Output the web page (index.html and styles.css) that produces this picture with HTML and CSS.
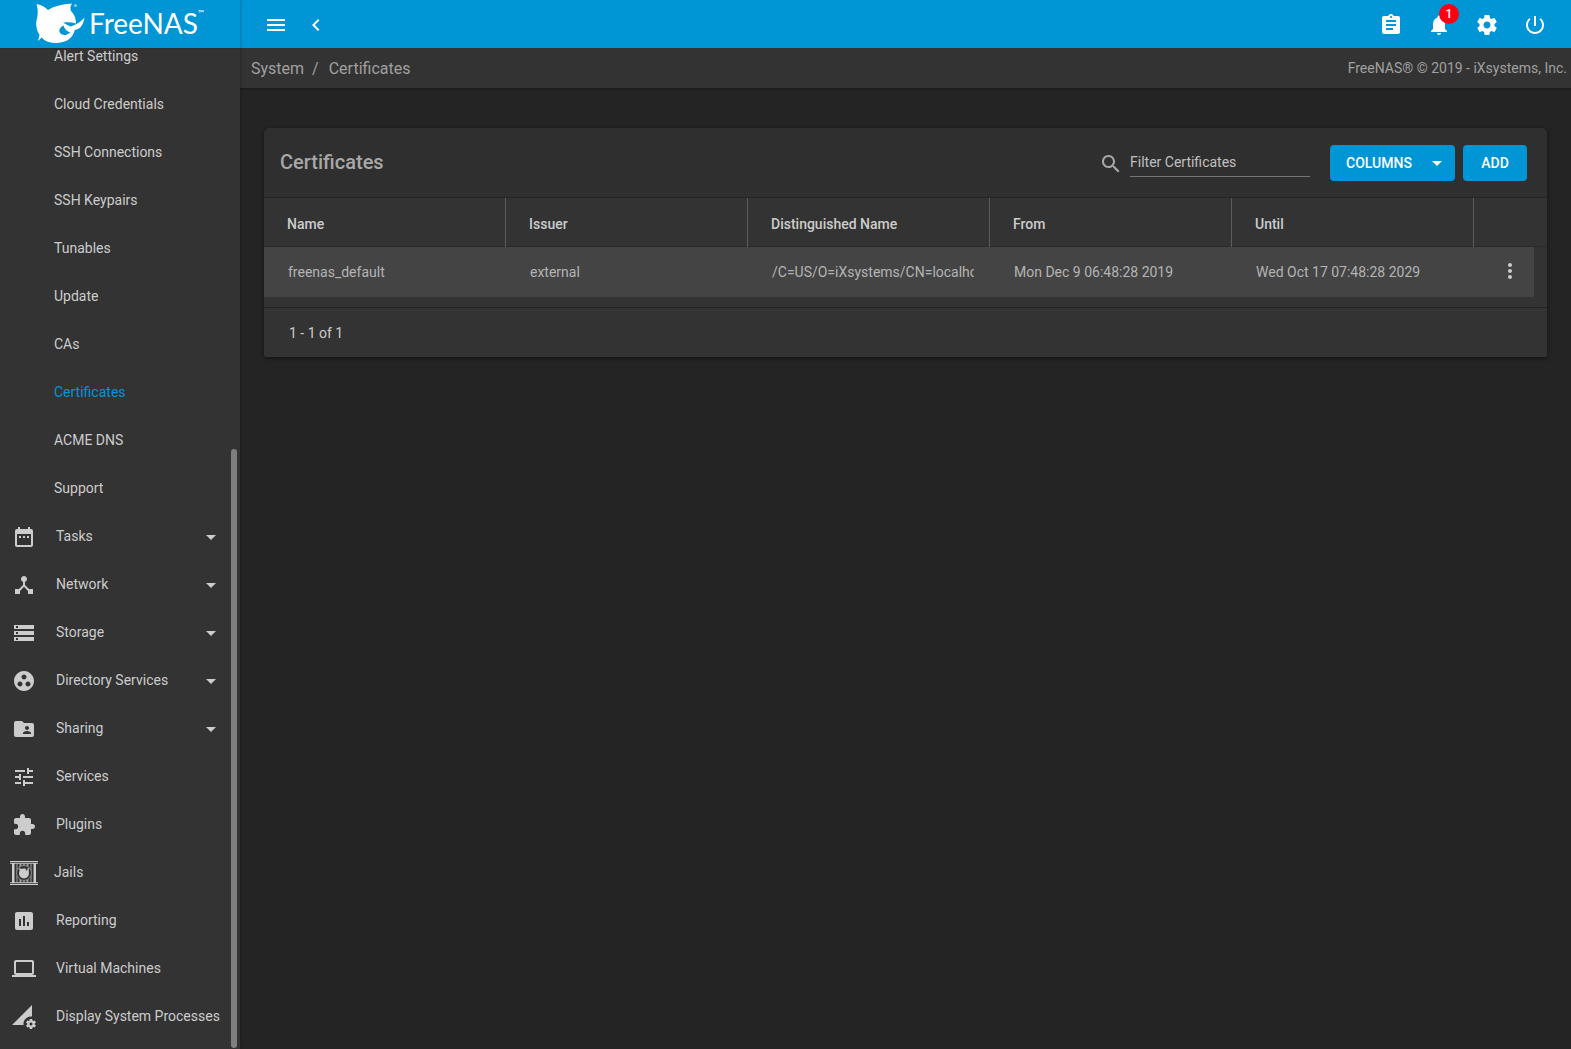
FILE: index.html
```html
<!DOCTYPE html>
<html lang="en">
<head>
<meta charset="utf-8">
<title>FreeNAS - Certificates</title>
<link rel="stylesheet" href="styles.css">
</head>
<body>
<svg class="defs" aria-hidden="true">
  <symbol id="drop" viewBox="0 0 24 24"><path d="M7 10l5 5 5-5z"/></symbol>
</svg>
<div class="app">
  <header class="topbar">
    <a class="brand" href="#" aria-label="FreeNAS home">
      <svg class="shark" viewBox="0 0 50 42" aria-hidden="true">
        <path d="M0.500 1Q7 2 12 7Q20 1.500 36 0.500Q33.500 4 35 8Q40 13 40 20.500Q34 18.500 27 19.500Q31 22 34.500 23.500Q43 21 48.500 14.500Q47.500 22 43 25.500Q41 27 39 26.500Q36 39 21 40Q10 40 5.500 34.500L2 38L3.500 32Q-1 25 0.500 17.500Q3 9 0.500 1Z"/>
        <path class="cut" d="M27.500 22.500Q22.500 25 23.500 29Q25 32.500 30 32L34.500 29.500Q29 28 27.500 22.500Z"/>
        <circle cx="39.500" cy="2.500" r="1.500" opacity=".5"/>
      </svg>
      <span class="wordmark">FreeNAS<sup>™</sup></span>
    </a>
    <div class="tools">
      <button class="icon-btn" aria-label="Toggle menu"><svg viewBox="0 0 24 24"><path d="M3 18h18v-2H3v2zm0-5h18v-2H3v2zm0-7v2h18V6H3z"/></svg></button>
      <button class="icon-btn back" aria-label="Collapse menu"><svg viewBox="0 0 24 24"><path d="M15.410 7.410L14 6l-6 6 6 6 1.410-1.410L10.830 12z"/></svg></button>
    </div>
    <div class="actions">
      <button class="icon-btn" aria-label="Task manager"><svg viewBox="0 0 24 24"><path d="M19 3h-4.180C14.400 1.840 13.300 1 12 1c-1.300 0-2.400.84-2.820 2H5c-1.100 0-2 .9-2 2v14c0 1.100.9 2 2 2h14c1.100 0 2-.9 2-2V5c0-1.100-.9-2-2-2zm-7 0c.55 0 1 .45 1 1s-.45 1-1 1-1-.45-1-1 .45-1 1-1zm2 14H7v-2h7v2zm3-4H7v-2h10v2zm0-4H7V7h10v2z"/></svg></button>
      <button class="icon-btn" aria-label="Notifications, 1 new"><svg viewBox="0 0 24 24"><path d="M12 22c1.100 0 2-.9 2-2h-4c0 1.100.89 2 2 2zm6-6v-5c0-3.070-1.640-5.640-4.500-6.320V4c0-.83-.67-1.500-1.500-1.500s-1.500.67-1.500 1.500v.68C7.630 5.360 6 7.920 6 11v5l-2 2v1h16v-1l-2-2z"/></svg><span class="badge">1</span></button>
      <button class="icon-btn" aria-label="Settings"><svg viewBox="0 0 24 24"><path d="M19.430 12.980c.04-.32.07-.64.07-.98s-.03-.66-.07-.98l2.110-1.650c.19-.15.24-.42.12-.64l-2-3.460c-.12-.22-.39-.3-.61-.22l-2.490 1c-.52-.4-1.080-.73-1.690-.98l-.38-2.650C14.460 2.180 14.250 2 14 2h-4c-.25 0-.46.18-.49.42l-.38 2.650c-.61.25-1.170.59-1.690.98l-2.490-1c-.23-.09-.49 0-.61.22l-2 3.460c-.13.22-.07.49.12.64l2.110 1.650c-.04.32-.07.65-.07.98s.03.66.07.98l-2.110 1.650c-.19.15-.24.42-.12.64l2 3.460c.12.22.39.3.61.22l2.490-1c.52.4 1.080.73 1.690.98l.38 2.650c.03.24.24.42.49.42h4c.25 0 .46-.18.49-.42l.38-2.650c.61-.25 1.170-.59 1.690-.98l2.490 1c.23.09.49 0 .61-.22l2-3.460c.12-.22.07-.49-.12-.64l-2.110-1.650zM12 15.500c-1.930 0-3.500-1.570-3.500-3.500s1.570-3.500 3.500-3.500 3.500 1.570 3.500 3.500-1.570 3.500-3.500 3.500z"/></svg></button>
      <button class="icon-btn" aria-label="Power"><svg viewBox="0 0 24 24"><path d="M13 3h-2v10h2V3zm4.830 2.170l-1.420 1.420C17.990 7.860 19 9.810 19 12c0 3.870-3.130 7-7 7s-7-3.130-7-7c0-2.190 1.010-4.140 2.580-5.420L6.170 5.170C4.230 6.820 3 9.260 3 12c0 4.970 4.030 9 9 9s9-4.030 9-9c0-2.740-1.230-5.180-3.170-6.830z"/></svg></button>
    </div>
  </header>

  <nav class="sidebar" aria-label="Main">
    <ul class="menu">
      <li><a class="sub" href="#">Alert Settings</a></li>
      <li><a class="sub" href="#">Cloud Credentials</a></li>
      <li><a class="sub" href="#">SSH Connections</a></li>
      <li><a class="sub" href="#">SSH Keypairs</a></li>
      <li><a class="sub" href="#">Tunables</a></li>
      <li><a class="sub" href="#">Update</a></li>
      <li><a class="sub" href="#">CAs</a></li>
      <li><a class="sub active" href="#" aria-current="page">Certificates</a></li>
      <li><a class="sub" href="#">ACME DNS</a></li>
      <li><a class="sub" href="#">Support</a></li>
      <li><a class="top" href="#"><svg viewBox="0 0 24 24"><path d="M9 11H7v2h2v-2zm4 0h-2v2h2v-2zm4 0h-2v2h2v-2zm2-7h-1V2h-2v2H8V2H6v2H5c-1.110 0-1.990.9-1.990 2L3 20c0 1.100.89 2 2 2h14c1.100 0 2-.9 2-2V6c0-1.100-.9-2-2-2zm0 16H5V9h14v11z"/></svg><span>Tasks</span><svg class="arrow"><use href="#drop"/></svg></a></li>
      <li><a class="top" href="#"><svg viewBox="0 0 24 24"><path d="M17 16l-4-4V8.820C14.160 8.400 15 7.300 15 6c0-1.660-1.340-3-3-3S9 4.340 9 6c0 1.300.84 2.400 2 2.820V12l-4 4H3v5h5v-3.050l4-4.200 4 4.200V21h5v-5h-4z"/></svg><span>Network</span><svg class="arrow"><use href="#drop"/></svg></a></li>
      <li><a class="top" href="#"><svg viewBox="0 0 24 24"><path d="M2 20h20v-4H2v4zm2-3h2v2H4v-2zM2 4v4h20V4H2zm4 3H4V5h2v2zm-4 7h20v-4H2v4zm2-3h2v2H4v-2z"/></svg><span>Storage</span><svg class="arrow"><use href="#drop"/></svg></a></li>
      <li><a class="top" href="#"><svg viewBox="0 0 24 24"><path d="M12 2C6.480 2 2 6.480 2 12s4.480 10 10 10 10-4.480 10-10S17.520 2 12 2zM8 17.500c-1.380 0-2.500-1.120-2.500-2.500s1.120-2.500 2.500-2.500 2.500 1.120 2.500 2.500-1.120 2.500-2.500 2.500zM9.500 8c0-1.380 1.120-2.500 2.500-2.500s2.500 1.120 2.500 2.500-1.120 2.500-2.500 2.500S9.500 9.380 9.500 8zm6.500 9.500c-1.380 0-2.500-1.120-2.500-2.500s1.120-2.500 2.500-2.500 2.500 1.120 2.500 2.500-1.120 2.500-2.500 2.500z"/></svg><span>Directory Services</span><svg class="arrow"><use href="#drop"/></svg></a></li>
      <li><a class="top" href="#"><svg viewBox="0 0 24 24"><path d="M20 6h-8l-2-2H4c-1.100 0-1.990.9-1.990 2L2 18c0 1.100.9 2 2 2h16c1.100 0 2-.9 2-2V8c0-1.100-.9-2-2-2zm-5 3c1.100 0 2 .9 2 2s-.9 2-2 2-2-.9-2-2 .9-2 2-2zm4 8h-8v-1c0-1.330 2.670-2 4-2s4 .67 4 2v1z"/></svg><span>Sharing</span><svg class="arrow"><use href="#drop"/></svg></a></li>
      <li><a class="top" href="#"><svg viewBox="0 0 24 24"><path d="M3 17v2h6v-2H3zM3 5v2h10V5H3zm10 16v-2h8v-2h-8v-2h-2v6h2zM7 9v2H3v2h4v2h2V9H7zm14 4v-2H11v2h10zm-6-4h2V7h4V5h-4V3h-2v6z"/></svg><span>Services</span></a></li>
      <li><a class="top" href="#"><svg viewBox="0 0 24 24"><path d="M20.500 11H19V7c0-1.100-.9-2-2-2h-4V3.500C13 2.120 11.880 1 10.500 1S8 2.120 8 3.500V5H4c-1.100 0-1.990.9-1.990 2v3.800H3.500c1.490 0 2.700 1.210 2.700 2.700s-1.210 2.700-2.700 2.700H2V20c0 1.100.9 2 2 2h3.800v-1.500c0-1.490 1.210-2.700 2.700-2.700 1.490 0 2.700 1.210 2.700 2.700V22H17c1.100 0 2-.9 2-2v-4h1.500c1.380 0 2.500-1.120 2.500-2.500S21.880 11 20.500 11z"/></svg><span>Plugins</span></a></li>
      <li><a class="top jails" href="#"><svg viewBox="0 0 28 24"><path d="M0 0h28v1H0zM0 1.700h28v1H0zM0 21.300h28v1H0zM0 23h28v1H0zM2 2.500h2.500v19H2zM23.500 2.500H26v19h-2.500z"/><path d="M6.500 2.500h1v19h-1zM9.500 2.500h2v19h-2zM13.200 2.500h1.600v19h-1.600zM16.500 2.500h2v19h-2zM20.500 2.500h1v19h-1z" opacity=".7"/><circle class="ring" cx="14" cy="12" r="7.500"/><circle cx="14" cy="12.500" r="5"/><path d="M9 7l4 1.500-3 3zM19 7l-3.500 1.500 3 3z"/><path class="hole" d="M15.500 8.500l2-.7-.5 2.200z"/></svg><span>Jails</span></a></li>
      <li><a class="top" href="#"><svg viewBox="0 0 24 24"><path d="M19 3H5c-1.100 0-2 .9-2 2v14c0 1.100.9 2 2 2h14c1.100 0 2-.9 2-2V5c0-1.100-.9-2-2-2zM9 17H7v-7h2v7zm4 0h-2V7h2v10zm4 0h-2v-4h2v4z"/></svg><span>Reporting</span></a></li>
      <li><a class="top" href="#"><svg viewBox="0 0 24 24"><path d="M20 18c1.100 0 1.990-.9 1.990-2L22 5c0-1.100-.9-2-2-2H4c-1.100 0-2 .9-2 2v11c0 1.100.9 2 2 2H0v2h24v-2h-4zM4 5h16v11H4V5z"/></svg><span>Virtual Machines</span></a></li>
      <li><a class="top" href="#"><svg viewBox="0 0 24 24"><path d="M18.990 11.500c.34 0 .67.030 1 .070L20 0 0 20h11.560c-.04-.33-.07-.66-.07-1 0-4.140 3.360-7.500 7.500-7.500zm3.710 7.990c.02-.16.04-.32.04-.49s-.01-.33-.04-.49l1.060-.83c.09-.08.12-.21.06-.32l-1-1.730c-.06-.11-.19-.15-.31-.11l-1.240.5c-.26-.2-.54-.37-.85-.49l-.19-1.320c-.01-.12-.12-.21-.24-.21h-2c-.12 0-.23.09-.25.21l-.19 1.320c-.3.13-.59.29-.85.49l-1.240-.5c-.11-.04-.24 0-.31.11l-1 1.730c-.06.11-.04.24.06.32l1.060.83c-.02.16-.03.32-.03.49s.01.33.03.49l-1.060.83c-.09.08-.12.21-.06.32l1 1.730c.06.11.19.15.31.11l1.240-.5c.26.2.54.37.85.49l.19 1.320c.02.12.12.21.25.21h2c.12 0 .23-.09.25-.21l.19-1.320c.3-.13.59-.29.84-.49l1.250.5c.11.04.24 0 .31-.11l1-1.730c.06-.11.03-.24-.06-.32l-1.070-.83zm-3.710 1.010c-.83 0-1.500-.67-1.500-1.500s.67-1.500 1.500-1.500 1.500.67 1.500 1.500-.67 1.500-1.500 1.500z"/></svg><span>Display System Processes</span></a></li>
    </ul>
    <div class="scrollbar" aria-hidden="true"></div>
  </nav>

  <div class="page">
    <div class="crumbs">
      <nav aria-label="Breadcrumb"><a href="#">System</a><span class="slash">/</span><a href="#">Certificates</a></nav>
      <span class="copyright">FreeNAS® © 2019 - iXsystems, Inc.</span>
    </div>
    <main>
      <section class="card">
        <div class="card-head">
          <h1>Certificates</h1>
          <label class="search" for="filter"><svg viewBox="0 0 24 24" aria-hidden="true"><path d="M15.500 14h-.79l-.28-.27C15.410 12.590 16 11.110 16 9.500 16 5.910 13.090 3 9.500 3S3 5.910 3 9.500 5.910 16 9.500 16c1.610 0 3.090-.59 4.230-1.570l.27.28v.79l5 4.990L20.490 19l-4.990-5zm-6 0C7.010 14 5 11.990 5 9.500S7.010 5 9.500 5 14 7.010 14 9.500 11.990 14 9.500 14z"/></svg></label>
          <input id="filter" type="text" placeholder="Filter Certificates" aria-label="Filter Certificates">
          <div class="buttons">
            <button class="btn columns">COLUMNS<svg><use href="#drop"/></svg></button>
            <button class="btn add">ADD</button>
          </div>
        </div>
        <table>
          <colgroup><col><col><col><col><col><col class="menu-col"></colgroup>
          <thead>
            <tr><th>Name</th><th>Issuer</th><th>Distinguished Name</th><th>From</th><th>Until</th><th></th></tr>
          </thead>
          <tbody>
            <tr>
              <td>freenas_default</td>
              <td>external</td>
              <td><div class="clip">/C=US/O=iXsystems/CN=localhost</div></td>
              <td>Mon Dec 9 06:48:28 2019</td>
              <td>Wed Oct 17 07:48:28 2029</td>
              <td class="menu-cell"><button aria-label="Row options"><svg viewBox="0 0 24 24"><path d="M12 8c1.100 0 2-.9 2-2s-.9-2-2-2-2 .9-2 2 .9 2 2 2zm0 2c-1.100 0-2 .9-2 2s.9 2 2 2 2-.9 2-2-.9-2-2-2zm0 6c-1.100 0-2 .9-2 2s.9 2 2 2 2-.9 2-2-.9-2-2-2z"/></svg></button></td>
            </tr>
          </tbody>
        </table>
        <div class="pager">1 - 1 of 1</div>
      </section>
    </main>
  </div>
</div>
</body>
</html>
```
FILE: styles.css
```css
* { box-sizing: border-box; }
body {
  margin: 0;
  background: #242424;
  color: #ccc;
  font: 14px/20px Roboto, sans-serif;
}
a { color: inherit; text-decoration: none; }
svg { display: block; width: 24px; height: 24px; fill: currentColor; flex: none; }
button { font: inherit; color: inherit; border: 0; padding: 0; background: none; cursor: pointer; }
.defs { display: none; }

.app {
  display: grid;
  grid-template: 48px minmax(0, 1fr) / 240px minmax(0, 1fr);
  height: 100vh;
}

/* Top bar */
.topbar {
  grid-column: 1 / -1;
  display: flex;
  align-items: center;
  background: #0095d5;
  color: #fff;
  z-index: 2;
}
.brand {
  display: flex;
  width: 240px;
  height: 48px;
  padding: 3px 0 0 36px;
  box-shadow: 1px 0 2px rgba(0, 0, 0, .2);
}
.shark { width: 50px; height: 42px; }
.shark .cut { fill: #0095d5; }
.wordmark {
  display: flex;
  padding-left: 3px;
  font: 400 28px/40px Lato, sans-serif;
}
.wordmark sup { font-size: 8px; line-height: 20px; }
.tools { display: flex; gap: 16px; padding: 2px 0 0 24px; }
.actions { display: flex; gap: 24px; margin-left: auto; padding: 2px 24px 0 0; }
.icon-btn { position: relative; }
.badge {
  position: absolute;
  top: -9px;
  right: -8px;
  width: 20px;
  height: 20px;
  border-radius: 50%;
  background: #ff0013;
  font-size: 12px;
  font-weight: 500;
}

/* Sidebar */
.sidebar {
  position: relative;
  overflow: hidden;
  background: #333;
  box-shadow: 0 0 3px rgba(0, 0, 0, .4);
  z-index: 1;
}
.menu { list-style: none; margin: -16px 0 0; padding: 0; }
.menu a { display: flex; align-items: center; height: 48px; }
.sub { padding-left: 54px; }
.sub.active { color: #0095d5; }
.top { gap: 20px; padding: 0 17px 0 12px; }
.top svg { margin-top: 2px; }
.top .arrow { margin-left: auto; }
.top.jails { gap: 16px; padding-left: 10px; }
.jails svg { width: 28px; }
.jails .ring { fill: #333; stroke: #888; }
.jails .hole { fill: #333; }
.scrollbar {
  position: absolute;
  top: 401px;
  right: 3px;
  bottom: 1px;
  width: 6px;
  border-radius: 3px;
  background: #7f7f7f;
}

/* Breadcrumbs */
.crumbs {
  display: flex;
  align-items: center;
  justify-content: space-between;
  height: 40px;
  padding: 0 4px 0 11px;
  background: #333;
  color: #a0a0a0;
  box-shadow: 0 1px 2px rgba(0, 0, 0, .4);
}
.crumbs nav { padding-top: 2px; font-size: 16px; }
.slash { padding: 0 10px 0 8px; }

/* Certificates card */
main { padding: 40px 24px; }
.card {
  border-radius: 6px 6px 2px 2px;
  background: #333;
  box-shadow: 0 1px 4px rgba(0, 0, 0, .5);
}
.card-head {
  display: flex;
  align-items: center;
  height: 70px;
  padding: 0 20px 0 16px;
  border-bottom: 1px solid #242424;
  border-radius: 6px 6px 0 0;
  background: #2f2f2f;
}
h1 { margin: 0 auto 0 0; padding-bottom: 2px; font-size: 20px; font-weight: 500; color: #a8a8a8; }
.search { color: #a8a8a8; padding: 2px 7px 0 0; }
#filter {
  width: 180px;
  height: 29px;
  padding: 0 0 1px;
  border: 0;
  border-bottom: 1px solid #757575;
  background: none;
  color: #ccc;
  font: inherit;
  outline: 0;
}
#filter::placeholder { color: #c0c0c0; opacity: 1; }
.buttons { display: flex; gap: 8px; margin-left: 20px; }
.btn {
  display: flex;
  align-items: center;
  justify-content: center;
  height: 36px;
  border-radius: 4px;
  background: #0095d5;
  color: #fff;
  font-weight: 500;
}
.columns { width: 125px; justify-content: space-between; padding: 0 6px 0 16px; }
.add { width: 64px; }

table { width: 100%; border-spacing: 0; table-layout: fixed; }
.menu-col { width: 73px; }
th {
  height: 49px;
  padding: 2px 16px 0 23px;
  border-right: 1px solid #5c5c5c;
  text-align: left;
  font-weight: 500;
  background: linear-gradient(#2a2a2a, #2a2a2a) bottom / 100% 1px no-repeat;
}
th:last-child { border-right: 0; }
td {
  height: 50px;
  padding: 0 16px 0 24px;
  background: #444;
  color: #b4b4b4;
  white-space: nowrap;
}
.clip { overflow: hidden; }
.menu-cell { padding: 0 13px 0 0; background-clip: content-box; }
.menu-cell button { display: grid; place-items: center; width: 100%; height: 50px; padding: 0 0 2px 12px; color: #ccc; }
.pager {
  margin-top: 10px;
  padding: 15px 25px 14px;
  border-top: 1px solid #242424;
}
```
